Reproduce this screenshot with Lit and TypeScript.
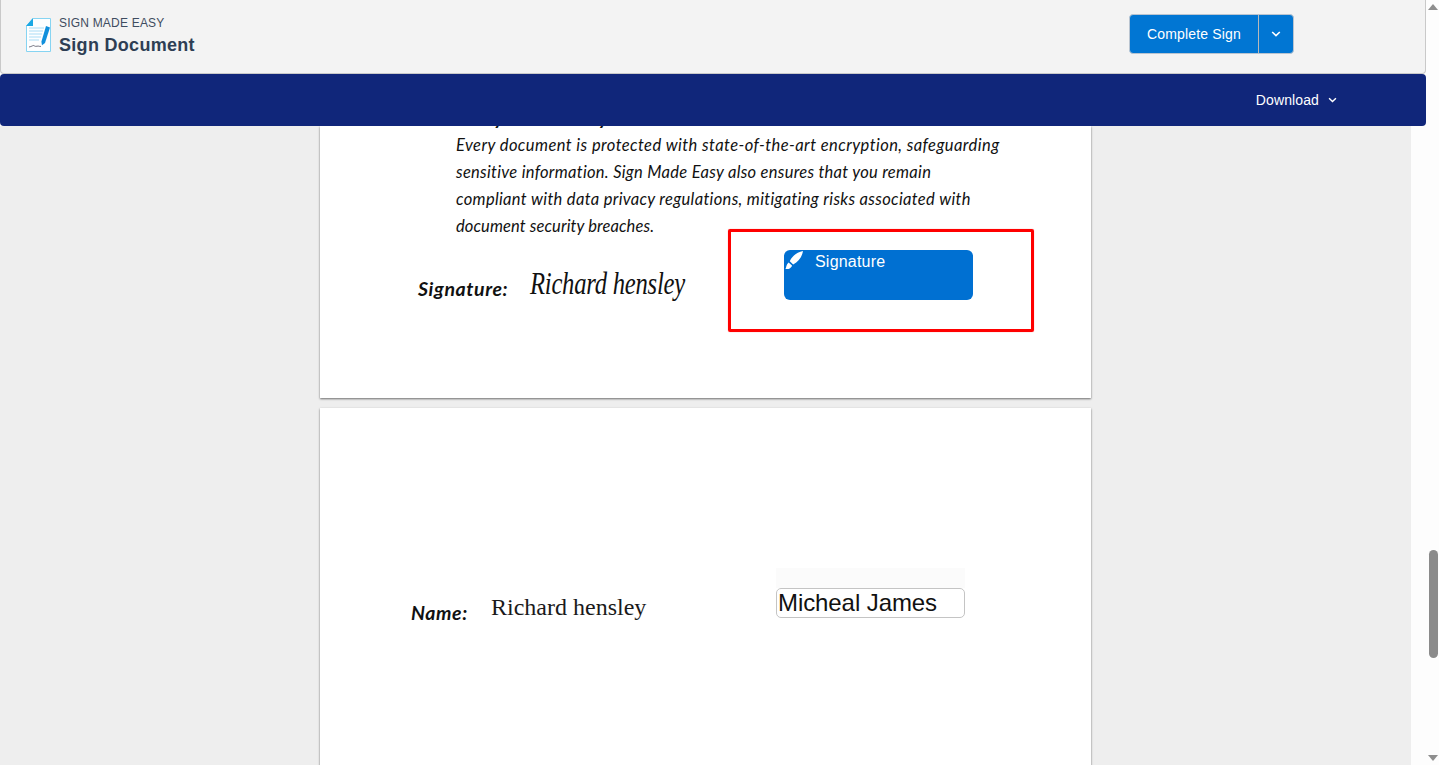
import { LitElement, html, css, svg } from "lit";
import { customElement } from "lit/decorators.js";

const brush = svg`<path fill="#fff" d="M18 0C12.5 1 7.2 4.6 4.8 10.2L8.2 13.4C13.6 10.8 17.2 5.4 18 0zM3.6 11.4L7 14.6C6.5 17 3.8 18.6.4 18.2C1.4 16.5 1.2 13.2 3.6 11.4z"/>`;

const lines: [string, number][] = [
  ["Every document is protected with state-of-the-art encryption, safeguarding", 0.43],
  ["sensitive information. Sign Made Easy also ensures that you remain", 0.29],
  ["compliant with data privacy regulations, mitigating risks associated with", 0.33],
  ["document security breaches.", 0.11],
];

@customElement("app-root")
export class AppRoot extends LitElement {
  static styles = css`
    :host { display: block; position: relative; width: 100%; height: 765px; overflow: hidden; background: #fdfdfd; font-family: "Liberation Sans", Arial, sans-serif; }
    .scrollbar { position: absolute; top: 0; right: 0; bottom: 0; width: 28px; background: #fdfdfd; }
    .arrow { position: absolute; right: 1px; width: 0; height: 0; border-left: 5.5px solid transparent; border-right: 5.5px solid transparent; }
    .arrow.up { top: 4px; border-bottom: 6px solid #8e8e8e; }
    .arrow.down { bottom: 4px; border-top: 6px solid #8e8e8e; }
    .thumb { position: absolute; top: 550px; right: 1px; width: 9px; height: 108px; border-radius: 5px; background: #8b8b8b; }
    .top { position: relative; z-index: 2; width: 1426px; }
    header { box-sizing: border-box; height: 74px; background: #f3f3f3; border: 1px solid #c9c9c9; border-top: 0; border-radius: 0 0 4px 4px; display: flex; align-items: center; padding: 0 0 0 24px; }
    .logo { width: 26px; height: 34px; margin-top: -3px; flex: none; }
    .titles { margin-left: 8px; color: #2e3e54; }
    .eyebrow { font-size: 12px; line-height: 16px; color: #3e4c60; letter-spacing: .2px; }
    .title { font-size: 18px; line-height: 28px; font-weight: 700; letter-spacing: .3px; }
    .btn { margin-left: auto; margin-right: 131px; margin-top: -6px; display: flex; height: 40px; box-sizing: border-box; border: 1px solid #b9c4d0; border-radius: 4px; background: #0176d3; color: #fff; }
    .btn-main { width: 128px; display: flex; align-items: center; justify-content: center; font-size: 14px; letter-spacing: .15px; border-right: 1px solid #b9b9b9; }
    .btn-caret { width: 34px; display: flex; align-items: center; justify-content: center; }
    nav { height: 52px; background: #10267a; border-radius: 4px; display: flex; align-items: center; justify-content: flex-end; padding-right: 89px; color: #fff; font-size: 14px; letter-spacing: .12px; gap: 9px; }
    .viewer { position: absolute; z-index: 1; top: 126px; left: 0; width: 1411px; bottom: 0; background: #eee; overflow: hidden; }
    .page { position: relative; width: 771px; margin: 0 0 0 320px; background: #fff; box-shadow: 0 1px 2px rgba(0,0,0,.55); }
    .page.one { height: 272px; margin-bottom: 10px; }
    .page.two { height: 400px; }
    .hand { font-family: "Lato", sans-serif; font-style: italic; color: #111; }
    .para { position: absolute; left: 136px; top: 6px; font-size: 16.5px; line-height: 27px; white-space: nowrap; }
    .clipped { position: absolute; left: 114px; top: -19px; font-size: 19px; line-height: 22px; letter-spacing: .6px; font-weight: 700; white-space: nowrap; }
    .label { position: absolute; font-weight: 700; font-size: 19.5px; letter-spacing: .6px; white-space: nowrap; }
    .sig { position: absolute; left: 210px; top: 139px; font-family: "Liberation Serif", serif; font-style: italic; font-size: 31px; line-height: 38px; color: #111; white-space: nowrap; letter-spacing: -.3px; transform: scaleX(.795); transform-origin: left center; }
    .frame { position: absolute; left: 408px; top: 103px; width: 306px; height: 103px; box-sizing: border-box; border: 3px solid #f00; border-radius: 2px; box-shadow: 0 0 1px rgba(255,0,0,.6); }
    .sigfield { position: absolute; left: 464px; top: 124px; width: 189px; height: 50px; border-radius: 6px; background: #0070d2; color: #fff; font-size: 16px; line-height: 22px; letter-spacing: .2px; }
    .sigfield svg { position: absolute; left: 1px; top: 1px; width: 18px; height: 18px; }
    .sigfield span { position: absolute; left: 31px; top: 1px; }
    .typed { position: absolute; left: 171px; top: 183px; font-family: "Liberation Serif", serif; font-size: 24px; line-height: 32px; color: #1a1a1a; white-space: nowrap; }
    .ghost { position: absolute; left: 456px; top: 160px; width: 189px; height: 20px; background: #fbfbfb; }
    .input { position: absolute; left: 456px; top: 180px; width: 189px; height: 30px; box-sizing: border-box; border: 1px solid #c4c4c4; border-radius: 5px; background: #fff; color: #111; font-size: 24px; line-height: 28px; letter-spacing: -.08px; padding-left: 1px; white-space: nowrap; }
  `;

  render() {
    return html`
      <div class="scrollbar">
        <div class="arrow up"></div>
        <div class="thumb"></div>
        <div class="arrow down"></div>
      </div>
      <div class="top">
        <header>
          <svg class="logo" viewBox="0 0 26 34" aria-hidden="true">
            <path d="M8 .5h17.5v33H1.5V8z" fill="#fdfeff" stroke="#86d4f2" stroke-width="1"/>
            <path d="M8 0v8H1z" fill="#1ba8e4"/>
            <path d="M4 10h15M4 13h14M4 16h13M4 19h12M4 22h10" stroke="#a9dcf5" stroke-width="1"/>
            <path d="M4 29c3-.4 4-2 5-1.4s1 1 3 .6 2 .4 4 .2" fill="none" stroke="#556" stroke-width=".8"/>
            <path d="M21 8l4 1.6-5 15.5-3 2.2-.6-3.6z" fill="#0f8fdc"/>
          </svg>
          <div class="titles">
            <div class="eyebrow">SIGN MADE EASY</div>
            <div class="title">Sign Document</div>
          </div>
          <div class="btn">
            <div class="btn-main">Complete Sign</div>
            <div class="btn-caret">
              <svg width="10" height="6" viewBox="0 0 10 6"><path d="M1.2 1l3.8 3.6L8.8 1" fill="none" stroke="#fff" stroke-width="1.6"/></svg>
            </div>
          </div>
        </header>
        <nav>
          <span>Download</span>
          <svg width="9" height="6" viewBox="0 0 10 6"><path d="M1.2 1l3.8 3.6L8.8 1" fill="none" stroke="#fff" stroke-width="1.6"/></svg>
        </nav>
      </div>
      <main class="viewer">
        <section class="page one">
          <div class="hand clipped">Security and Privacy</div>
          <div class="hand para">
            ${lines.map(([t, s]) => html`<div style="letter-spacing:${s}px">${t}</div>`)}
          </div>
          <div class="hand label" style="left:98px;top:151px">Signature:</div>
          <div class="sig">Richard hensley</div>
          <div class="frame"></div>
          <div class="sigfield">
            <svg viewBox="0 0 18 18" aria-hidden="true">${brush}</svg>
            <span>Signature</span>
          </div>
        </section>
        <section class="page two">
          <div class="hand label" style="left:91px;top:193px">Name:</div>
          <div class="typed">Richard hensley</div>
          <div class="ghost"></div>
          <div class="input">Micheal James</div>
        </section>
      </main>
    `;
  }
}
